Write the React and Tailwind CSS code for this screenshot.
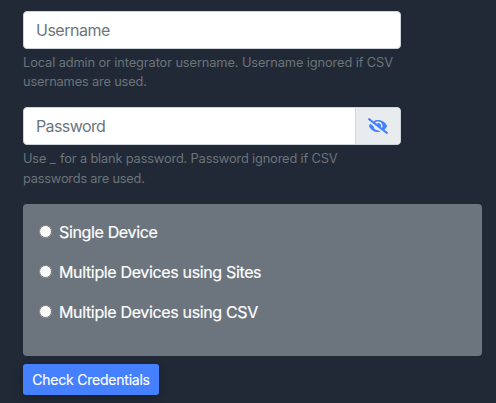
import { FaEyeSlash } from "react-icons/fa";

const modes = ["Single Device", "Multiple Devices using Sites", "Multiple Devices using CSV"];

export default function App() {
  return (
    <form className="flex h-[403px] w-[496px] flex-col items-start overflow-hidden bg-[#212937] pt-[11px] pl-[23px] font-['Inter',sans-serif]">
      <input
        type="text"
        placeholder="Username"
        className="h-[38px] w-[378px] rounded border border-[#ced4da] bg-white px-3 text-base tracking-[-0.5px] placeholder:text-[#6c757d]"
      />
      <p className="mt-1 w-[378px] text-[12.8px] leading-[19.2px] tracking-[-0.1px] text-[#6b7479]">
        Local admin or integrator username. Username ignored if CSV<br />
        <span className="tracking-[-0.16px]">usernames are used.</span>
      </p>
      <div className="mt-4 flex h-[38px] w-[378px] overflow-hidden rounded border border-[#ced4da] bg-white">
        <input type="password" placeholder="Password" className="min-w-0 flex-1 px-3 text-base tracking-[-0.6px] placeholder:text-[#6c757d]" />
        <button type="button" aria-label="Show password" className="flex w-[45px] items-center justify-center border-l border-[#ced4da] bg-[#e9ecef]">
          <FaEyeSlash className="h-4 w-5 text-[#4480ff]" />
        </button>
      </div>
      <p className="mt-1 w-[378px] text-[12.8px] leading-[19.2px] tracking-[-0.15px] text-[#6b7479]">
        Use <span className="mr-[1px] tracking-normal">_</span> for a blank password. Password ignored if CSV<br />
        <span className="tracking-[-0.2px]">passwords are used.</span>
      </p>
      <div className="mt-4 flex h-[152px] w-[459px] shrink-0 flex-col gap-4 rounded bg-[#6c757d] px-4 pt-4">
        {modes.map((mode) => (
          <label key={mode} className="flex h-6 items-center text-base tracking-[-0.35px] text-white [-webkit-text-stroke:0.2px_white]">
            <input type="radio" name="mode" className="mr-[7px] h-[13px] w-[13px]" />
            {mode}
          </label>
        ))}
      </div>
      <button type="button" className="mt-2 h-[31px] w-[136px] shrink-0 rounded-[3px] bg-[#4480ff] pt-[2px] text-sm tracking-[-0.22px] text-white shadow-[0_2px_10px_rgba(0,0,0,0.25)] [-webkit-text-stroke:0.15px_white]">
        Check Credentials
      </button>
    </form>
  );
}
